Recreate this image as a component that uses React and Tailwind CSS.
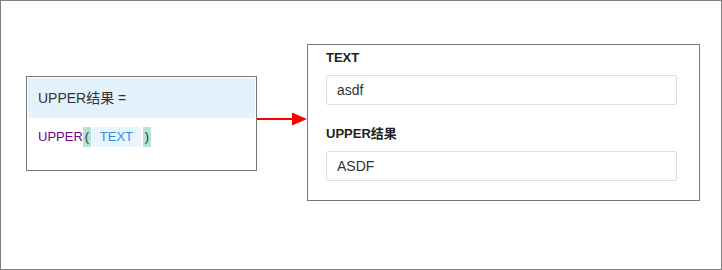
import React from 'react';

const sans = { fontFamily: '"Liberation Sans", Arial, "Noto Sans CJK SC", sans-serif' };

const Field = ({ label, value, top }) => (
  <div className={top}>
    <div className="h-[20px] leading-[20px] text-[13px] font-bold text-[#222]">{label}</div>
    <div className="mt-[7px] h-[30px] w-[351px] border border-[#ddd] rounded-[2px] bg-white pl-[10px] flex items-center text-[14px] text-[#333]">
      {value}
    </div>
  </div>
);

const App = () => {
  return (
    <div style={sans} className="w-[722px] h-[270px] border border-[#808080] bg-white flex items-start">
      <div className="ml-[25px] mt-[75px] w-[231px] h-[95px] border border-[#777] p-px bg-white">
        <div className="h-[40px] bg-[#e3f2fd] pl-[10px] flex items-center text-[14px] text-[#333]">
          UPPER结果 =
        </div>
        <div className="mt-[9px] pl-[10px] flex items-center h-[20px] text-[13px]">
          <span className="text-[#770088]">UPPER</span>
          <span className="inline-block w-[8px] text-center bg-[#b5e3da] text-[#333] leading-[20px]">(</span>
          <span className="ml-px bg-[#eaf5fd] text-[#2d8fe5] rounded-[3px] leading-[20px] px-[8px]">TEXT</span>
          <span className="ml-[2px] inline-block w-[8px] text-center bg-[#b5e3da] text-[#333] leading-[20px]">)</span>
        </div>
      </div>

      <svg className="mt-[111px] shrink-0" width="50" height="16" viewBox="0 0 50 16">
        <line x1="0" y1="7" x2="37" y2="7" stroke="#ff0000" strokeWidth="2" />
        <polygon points="35,0.5 50,7 35,13.5" fill="#ff0000" />
      </svg>

      <div className="mt-[43px] w-[393px] h-[157px] border border-[#777] bg-white pl-[18px] pt-[3px]">
        <Field label="TEXT" value="asdf" top="" />
        <Field label="UPPER结果" value="ASDF" top="mt-[19px]" />
      </div>
    </div>
  );
};

export default App;
